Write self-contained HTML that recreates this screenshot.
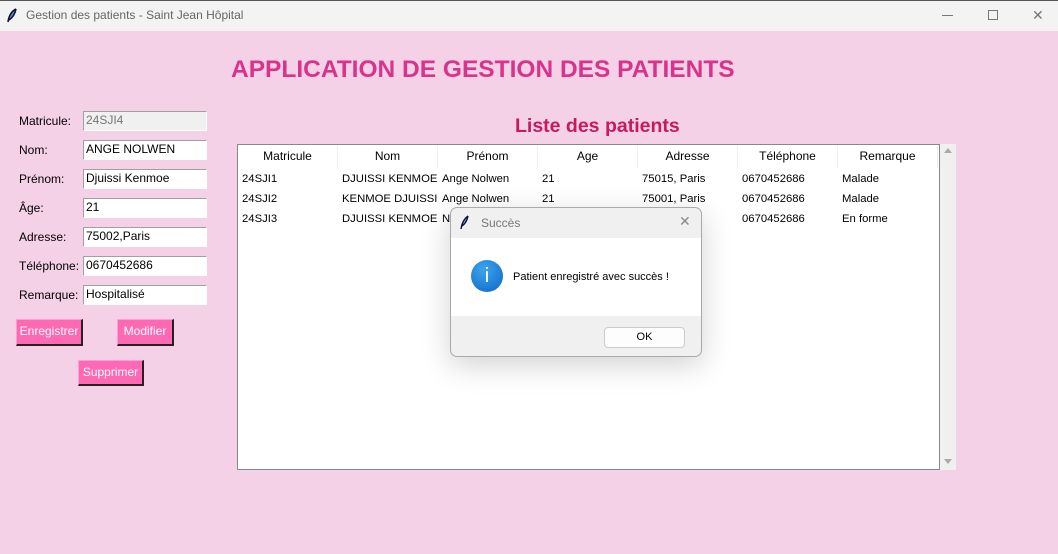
<!DOCTYPE html><html><head><meta charset="utf-8"><style>
*{margin:0;padding:0;box-sizing:border-box}
body{width:1058px;height:554px;background:#f5d1e8;font-family:"Liberation Sans",sans-serif;font-size:12px;position:relative;overflow:hidden;color:#000}
.a{position:absolute}
.tb{left:0;top:0;width:1058px;height:31px;background:#f3f3f3;border-top:1px solid #555}
.lab{left:19px;font-size:12px}
.in{left:83px;width:124px;height:20px;background:#fff;border:1px solid #a0a0a0;border-right-color:#fff;border-bottom-color:#fff;padding:1px 2px;font-size:12px}
.btn{background:#ff69b4;color:#fff;font-size:12px;border:1px solid #ff9ed6;border-right:2px solid #222;border-bottom:2px solid #222;text-align:center;line-height:23px}
.col{top:145px;width:100px;height:23px;line-height:23px;text-align:center;border-right:1px solid #eee}
.cell{font-size:11.3px;width:98px;overflow:hidden;white-space:nowrap}
</style></head><body>
<div class="a tb"></div>
<svg class="a" style="left:6px;top:8px" width="12" height="16" viewBox="0 0 12 16"><path d="M10 1C6 3 3 7 2 14M10 1C9 6 6 10 3 12" stroke="#113" stroke-width="1.6" fill="#4a90d9"/></svg>
<div class="a" style="left:26px;top:8px;color:#666;font-size:12px">Gestion des patients - Saint Jean Hôpital</div>
<div class="a" style="left:942px;top:15px;width:11px;height:1px;background:#777"></div>
<div class="a" style="left:988px;top:10px;width:10px;height:10px;border:1px solid #777"></div>
<div class="a" style="left:1032px;top:7px;font-size:14px;color:#777">✕</div>
<div class="a" style="left:231px;top:56px;font-size:24.5px;font-weight:bold;color:#d9348b">APPLICATION DE GESTION DES PATIENTS</div>
<div class="a" style="left:515px;top:115px;font-size:19.5px;font-weight:bold;color:#c8195e">Liste des patients</div>

<div class="a lab" style="top:114px">Matricule:</div><div class="a in" style="top:111px;background:#f0f0f0;color:#777">24SJI4</div>
<div class="a lab" style="top:143px">Nom:</div><div class="a in" style="top:140px">ANGE NOLWEN</div>
<div class="a lab" style="top:172px">Prénom:</div><div class="a in" style="top:169px">Djuissi Kenmoe</div>
<div class="a lab" style="top:201px">Âge:</div><div class="a in" style="top:198px">21</div>
<div class="a lab" style="top:230px">Adresse:</div><div class="a in" style="top:227px">75002,Paris</div>
<div class="a lab" style="top:259px">Téléphone:</div><div class="a in" style="top:256px">0670452686</div>
<div class="a lab" style="top:288px">Remarque:</div><div class="a in" style="top:285px">Hospitalisé</div>
<div class="a btn" style="left:16px;top:319px;width:67px;height:27px">Enregistrer</div>
<div class="a btn" style="left:117px;top:319px;width:57px;height:27px">Modifier</div>
<div class="a btn" style="left:78px;top:360px;width:66px;height:26px">Supprimer</div>

<div class="a" style="left:237px;top:144px;width:703px;height:326px;background:#fff;border:1px solid #888"></div>
<div class="a" style="left:940px;top:144px;width:16px;height:326px;background:#f0f0f0"></div>
<div class="a" style="left:944px;top:148px;border:4px solid transparent;border-bottom:5px solid #aaa;border-top:0"></div>
<div class="a" style="left:944px;top:459px;border:4px solid transparent;border-top:5px solid #aaa;border-bottom:0"></div>
<div class="a col" style="left:238px">Matricule</div><div class="a col" style="left:338px">Nom</div><div class="a col" style="left:438px">Prénom</div><div class="a col" style="left:538px">Age</div><div class="a col" style="left:638px">Adresse</div><div class="a col" style="left:738px">Téléphone</div><div class="a col" style="left:838px">Remarque</div>
<div class="a cell" style="left:242px;top:169px;line-height:20px">24SJI1<br>24SJI2<br>24SJI3</div>
<div class="a cell" style="left:342px;top:169px;line-height:20px;width:96px">DJUISSI KENMOE<br>KENMOE DJUISSI<br>DJUISSI KENMOE</div>
<div class="a cell" style="left:442px;top:169px;line-height:20px">Ange Nolwen<br>Ange Nolwen<br>N</div>
<div class="a cell" style="left:542px;top:169px;line-height:20px">21<br>21</div>
<div class="a cell" style="left:642px;top:169px;line-height:20px">75015, Paris<br>75001, Paris</div>
<div class="a cell" style="left:742px;top:169px;line-height:20px">0670452686<br>0670452686<br>0670452686</div>
<div class="a cell" style="left:842px;top:169px;line-height:20px">Malade<br>Malade<br>En forme</div>

<div class="a" style="left:450px;top:207px;width:252px;height:150px;border:1px solid #aaa;border-radius:7px;background:#f0f0f0;overflow:hidden;box-shadow:0 8px 30px rgba(0,0,0,.18)">
<div class="a" style="left:0;top:30px;width:252px;height:78px;background:#fff"></div>
<svg class="a" style="left:9px;top:7px" width="10" height="15" viewBox="0 0 10 15"><path d="M8 1C5 3 2 7 1 14M8 1C7 6 5 9 2 11" stroke="#113" stroke-width="1.4" fill="#4a90d9"/></svg>
<div class="a" style="left:30px;top:8px;color:#777;font-size:12px">Succès</div>
<div class="a" style="left:228px;top:5px;color:#888;font-size:14px">✕</div>
<div class="a" style="left:20px;top:52px;width:32px;height:32px;border-radius:50%;background:radial-gradient(circle at 40% 30%,#3fa3ea,#0a68c8);color:#fff;text-align:center;line-height:32px;font-size:20px">i</div>
<div class="a" style="left:62px;top:63px;font-size:11px">Patient enregistré avec succès !</div>
<div class="a" style="left:153px;top:119px;width:81px;height:21px;background:#fdfdfd;border:1px solid #ccc;border-radius:4px;text-align:center;line-height:19px;font-size:11px">OK</div>
</div>
</body></html>
